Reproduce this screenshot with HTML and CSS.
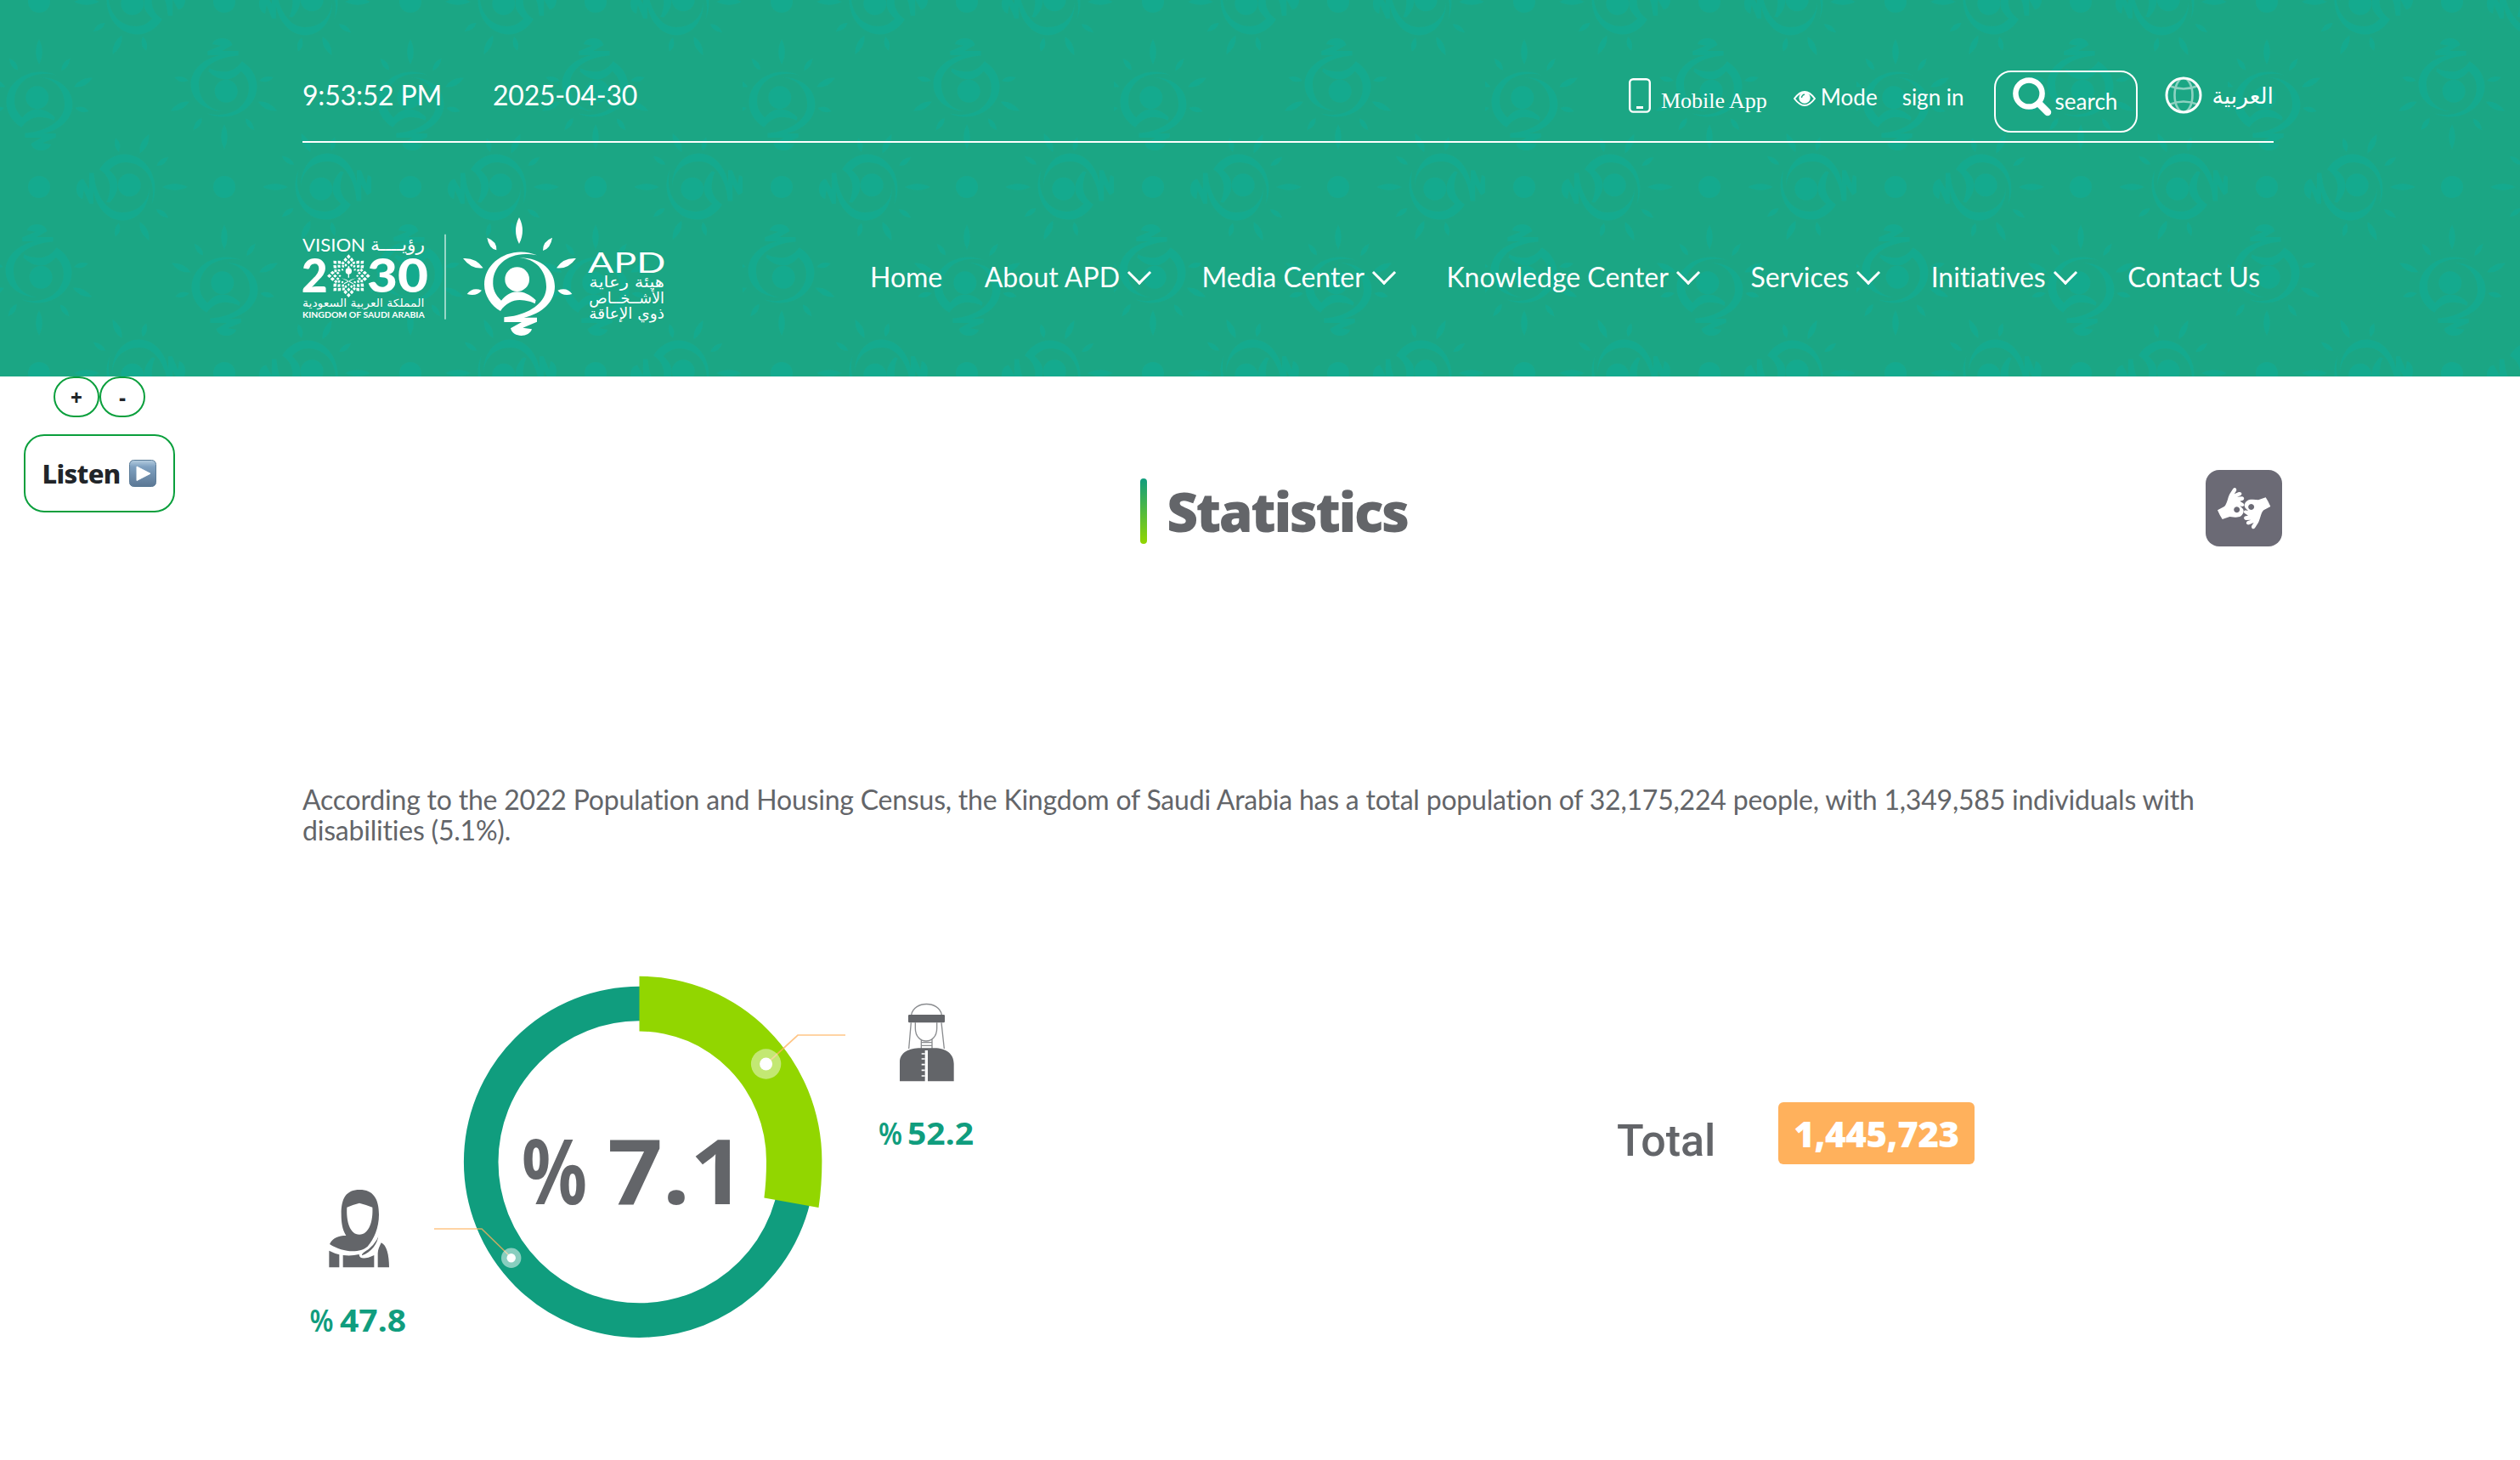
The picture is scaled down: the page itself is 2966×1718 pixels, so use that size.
FILE: index.html
```html
<!DOCTYPE html>
<html lang="en">
<head>
<meta charset="utf-8">
<title>Statistics - APD</title>
<link rel="stylesheet" href="styles.css">
</head>
<body>
<header class="header">
  <svg class="header-pattern" width="2966" height="443" aria-hidden="true">
    <defs>
      <g id="bulb">
        <path d="M813 48Q837 95 813 142Q789 95 813 48ZM700 120Q735 133 733 164Q706 158 700 120ZM930 120Q924 158 897 166Q896 133 930 120ZM615 193Q661 190 686 227Q645 233 615 193ZM1014 193Q985 233 945 227Q968 190 1014 193ZM629 319Q648 293 681 306Q662 329 629 319ZM1000 319Q967 329 949 306Q982 293 1000 319Z"/>
        <circle cx="806" cy="267" r="43"/>
        <path d="M876 182C790 145 690 200 690 285C690 325 715 360 747 379C765 352 790 340 815 340C838 341 858 346 869 353L872 341C850 320 830 311 806 311C783 311 765 325 750 342C728 322 719 300 721 272C725 215 780 162 876 182Z"/>
        <path d="M814 191C895 191 939 240 939 292C939 345 895 388 830 402L876 402L876 417L826 438L858 443C850 473 790 475 783 440L822 418L760 418L760 401L795 396C860 382 908 345 909 295C910 235 870 195 814 191Z"/>
      </g>
      <g id="motif" transform="scale(.313) translate(-813 -258)"><use href="#bulb"/></g>
      <pattern id="bulbs" width="437" height="437" patternUnits="userSpaceOnUse">
        <g fill="#14aa8e">
          <use href="#motif" x="46" y="112"/>
          <use href="#motif" transform="translate(264 110) rotate(180)"/>
          <use href="#motif" transform="translate(46 329) rotate(180)"/>
          <use href="#motif" x="264" y="330"/>
          <use href="#motif" transform="translate(155 220) rotate(90)"/>
          <use href="#motif" transform="translate(375 220) rotate(-90)"/>
          <use href="#motif" transform="translate(153 2) rotate(-90)"/>
          <use href="#motif" transform="translate(370 2) rotate(90)"/>
          <use href="#motif" transform="translate(153 439) rotate(-90)"/>
          <use href="#motif" transform="translate(370 439) rotate(90)"/>
          <circle cx="46" cy="2" r="13"/><circle cx="264" cy="2" r="13"/>
          <circle cx="46" cy="220" r="13"/><circle cx="264" cy="220" r="13"/>
          <circle cx="46" cy="439" r="13"/><circle cx="264" cy="439" r="13"/>
        </g>
      </pattern>
    </defs>
    <rect width="2966" height="443" fill="url(#bulbs)"/>
  </svg>
  <div class="container">
    <div class="topbar">
      <div class="clock"><span class="time">9:53:52 PM</span><span class="date">2025-04-30</span></div>
      <div class="tools">
        <a class="mobile"><svg width="26" height="41" viewBox="0 0 26 41" fill="none" stroke="#fff" stroke-width="2.4"><rect x="1.2" y="1.2" width="23.6" height="38.4" rx="4"/><path d="M9 34.5h8" stroke-width="3"/></svg><span>Mobile App</span></a>
        <a class="mode"><svg width="26" height="18" viewBox="0 0 26 18"><path d="M1 9Q13-7 25 9Q13 25 1 9Z" fill="none" stroke="#fff" stroke-width="2"/><circle cx="13" cy="8" r="6.7" fill="#fff"/><path d="M9.5 8A3.6 3.6 0 0 1 13 4.3" fill="none" stroke="#1ba684" stroke-width="1.4"/></svg><span>Mode</span></a>
        <a class="signin">sign in</a>
        <a class="search"><svg width="46" height="46" viewBox="0 0 46 46" fill="none" stroke="#fff"><circle cx="19" cy="19" r="15.6" stroke-width="6.5"/><path d="M31 31L41 41" stroke-width="8.5" stroke-linecap="round"/></svg><span>search</span></a>
        <a class="lang"><svg width="44" height="44" viewBox="0 0 44 44" fill="none" stroke="#fff"><g stroke-width="2.6" opacity=".5"><ellipse cx="22" cy="22" rx="10.5" ry="20"/><path d="M5 11Q22 18 39 11M5 33Q22 26 39 33"/></g><circle cx="22" cy="22" r="20" stroke-width="3"/></svg><span lang="ar" dir="rtl">العربية</span></a>
      </div>
    </div>
    <div class="mainbar">
      <svg class="logo" width="430" height="145" viewBox="48 40 1290 435" fill="#fff">
        <defs>
          <g id="arm"><path d="M0-76l7 8-7 8-7-8ZM-11-65l7 8-7 8-7-8ZM11-65l7 8-7 8-7-8ZM0-55l6 7-6 7-6-7ZM-20-52l6 7-6 6-6-6ZM-10-44l5 6-5 6-5-6ZM10-44l5 6-5 6-5-6ZM0-36l4 5-4 5-4-5Z"/></g>
        </defs>
        <text class="lato" x="48" y="170" font-size="66" textLength="222" lengthAdjust="spacingAndGlyphs">VISION</text>
        <text class="arabic" x="288" y="166" font-size="64" textLength="192" lengthAdjust="spacingAndGlyphs">رؤيــــة</text>
        <text class="black" x="44" y="314" font-size="163" textLength="93" lengthAdjust="spacingAndGlyphs">2</text>
        <g transform="translate(211 255)">
          <use href="#arm"/><use href="#arm" transform="rotate(45)"/><use href="#arm" transform="rotate(90)"/><use href="#arm" transform="rotate(135)"/><use href="#arm" transform="rotate(180)"/><use href="#arm" transform="rotate(225)"/><use href="#arm" transform="rotate(270)"/><use href="#arm" transform="rotate(315)"/>
          <circle cy="-17" r="11"/><path d="M-2-10H2V6H-2ZM-26 8Q-5 12 17 26L15 29Q-8 16-26 8ZM26 8Q5 12-17 26L-15 29Q8 16 26 8Z"/>
        </g>
        <text class="black" x="276" y="314" font-size="163" textLength="216" lengthAdjust="spacingAndGlyphs">30</text>
        <text class="arabic" x="48" y="364" font-size="38" textLength="430" lengthAdjust="spacingAndGlyphs">المملكة العربية السعودية</text>
        <text class="bold" x="48" y="403" font-size="27" textLength="431" lengthAdjust="spacingAndGlyphs">KINGDOM OF SAUDI ARABIA</text>
        <path d="M549 108h6V408h-6Z" opacity=".55"/>
        <use href="#bulb"/>
        <text class="lato" x="1056" y="243" font-size="99" textLength="274" lengthAdjust="spacingAndGlyphs">APD</text>
        <text class="arabic" x="1060" y="294" font-size="54" textLength="266" lengthAdjust="spacingAndGlyphs">هيئة رعاية</text>
        <text class="arabic" x="1060" y="351" font-size="54" textLength="266" lengthAdjust="spacingAndGlyphs">الأشــخــاص</text>
        <text class="arabic" x="1060" y="407" font-size="54" textLength="266" lengthAdjust="spacingAndGlyphs">ذوي الإعاقة</text>
      </svg>
      <nav class="nav">
        <a>Home</a>
        <a class="menu">About APD<i class="chevron"></i></a>
        <a class="menu">Media Center<i class="chevron"></i></a>
        <a class="menu">Knowledge Center<i class="chevron"></i></a>
        <a class="menu">Services<i class="chevron"></i></a>
        <a class="menu">Initiatives<i class="chevron"></i></a>
        <a>Contact Us</a>
      </nav>
    </div>
  </div>
</header>

<main class="page">
  <aside class="reader">
    <div class="sizes"><button class="size">+</button><button class="size">-</button></div>
    <button class="listen">Listen <svg width="32" height="32" viewBox="0 0 32 32"><defs><linearGradient id="key" x2="0" y2="1"><stop offset="0" stop-color="#b5cde0"/><stop offset=".25" stop-color="#7fa1c1"/><stop offset="1" stop-color="#5b7794"/></linearGradient></defs><rect x=".5" y=".5" width="31" height="31" rx="5" fill="url(#key)" stroke="#5c7c98"/><path d="M9 8v16.500l16-8.250Z" fill="#fff" stroke="#fff" stroke-linejoin="round"/></svg></button>
  </aside>
  <button class="sign" aria-label="Sign language">
    <svg width="90" height="90" viewBox="108 69 270 270" fill="#fff">
      <g id="hand"><path fill-rule="evenodd" d="M150 211L174 198C184 189 185 170 193 154L205 135C212 127 221 137 215 145L209 154L225 147C236 145 239 156 230 160L219 164L236 163C246 164 246 176 237 177L229 179L241 187C248 193 242 200 234 197L229 196C237 203 243 208 242 216C239 232 226 237 212 236L193 234L167 243Q157 228 150 211ZM218 199a10.500 10.500 0 1 0 .1 0Z"/></g>
      <use href="#hand" transform="rotate(180 243.500 204.500)"/>
    </svg>
  </button>
  <div class="container">
    <h1 class="title"><span class="title-bar"></span><span class="title-text">Statistics</span></h1>
    <p class="intro">According to the 2022 Population and Housing Census, the Kingdom of Saudi Arabia has a total population of 32,175,224 people, with 1,349,585 individuals with disabilities (5.1%).</p>
    <section class="stats">
      <svg class="chart" width="800" height="440" viewBox="356 1140 800 440">
        <circle cx="752.500" cy="1367.300" r="186.300" fill="none" stroke="#109d7e" stroke-width="40.600"/>
        <path d="M752.500 1148.700A215 217.300 0 0 1 967.400 1366Q967.400 1395 963.500 1421L899.400 1409.500Q902 1390 902 1366A149.500 152.500 0 0 0 752.500 1213.500Z" fill="#92d600"/>
        <g fill="none" stroke="#ffb15c" stroke-width="1.700" opacity=".75"><path d="M902 1252L939 1218H995M602 1480L567 1446H511"/></g>
        <g fill="#fff"><circle cx="901.600" cy="1252" r="17.700" opacity=".45"/><circle cx="901.600" cy="1252" r="7.500"/><circle cx="601.700" cy="1480.300" r="11.700" opacity=".5"/><circle cx="601.700" cy="1480.300" r="5.200"/></g>
        <g class="figure">
          <text x="614" y="1416.500" font-size="106" font-weight="700" textLength="77" lengthAdjust="spacingAndGlyphs">%</text>
          <text x="715" y="1416.500" font-size="106" font-weight="700" textLength="162" lengthAdjust="spacingAndGlyphs">7.1</text>
        </g>
        <g class="share">
          <text x="1034" y="1346.500" font-size="36" font-weight="600" textLength="28" lengthAdjust="spacingAndGlyphs">%</text>
          <text x="1068" y="1346.500" font-size="36" font-weight="700" textLength="78" lengthAdjust="spacingAndGlyphs">52.2</text>
          <text x="364.500" y="1567" font-size="36" font-weight="600" textLength="28" lengthAdjust="spacingAndGlyphs">%</text>
          <text x="400" y="1567" font-size="36" font-weight="700" textLength="78" lengthAdjust="spacingAndGlyphs">47.8</text>
        </g>
        <g transform="translate(1020 1170) scale(.33333)" fill="#636569">
          <path d="M117 307V240C117 205 150 190 190 190H240C280 190 308 210 308 245V307H216V198H206V307Z"/>
          <rect x="147" y="72" width="129" height="28" rx="4"/>
          <g fill="none" stroke="#636569" stroke-width="4"><path d="M158 72C168 22 255 22 265 72M172 100V120C172 180 248 180 248 120V100M193 158V192M231 158V192M193 170H231M193 181H231M157 100L149 192M264 100L274 192" opacity=".75"/></g>
          <path d="M194 210h12M194 228h12M194 248h12M194 268h12M194 288h12" stroke="#fff" stroke-width="5"/>
        </g>
        <g transform="translate(350 1380) scale(.33333)" fill="#636569">
          <path fill-rule="evenodd" d="M155 145C155 90 172 60 220 60C268 60 288 92 288 148C288 195 270 235 248 260C220 285 160 282 114 252C125 229 145 222 172 222C158 200 155 175 155 145ZM175 122C172 170 185 218 219 218C253 218 268 170 265 122Q243 113 219 107Q195 113 175 122Z"/>
          <path d="M112 275Q132 285 148 289V334H112ZM161 291Q190 295 218 288C218 305 240 306 271 291V334H161ZM296 247C315 255 324 290 324 334H284V284C284 272 290 260 296 247ZM286 220C285 250 260 282 228 292C228 280 258 270 286 220Z"/>
          <path d="M289 212C276 245 255 268 230 280" fill="none" stroke="#fff" stroke-width="6"/>
        </g>
      </svg>
      <div class="total"><span class="total-label">Total</span><span class="total-badge">1,445,723</span></div>
    </section>
  </div>
</main>
</body>
</html>
```
FILE: styles.css
```css
* { box-sizing: border-box; }
body {
  margin: 0;
  background: #fff;
  font-family: Lato, "DejaVu Sans", sans-serif;
  font-variant-ligatures: none;
  color: #636569;
  overflow: hidden;
}
button { padding: 0; background: none; font: inherit; }
.container { width: 2320px; margin: 0 auto 0 356px; }

.header { position: relative; height: 443px; background: #1ba684; color: #fff; overflow: hidden; }
.header-pattern { position: absolute; left: 0; top: 0; }
.header .container { position: relative; }

.topbar {
  display: flex;
  justify-content: space-between;
  align-items: flex-start;
  height: 168px;
  padding-top: 83px;
  border-bottom: 2px solid #fff;
}
.clock { display: flex; gap: 60px; padding-top: 9px; font-size: 32px; line-height: 40px; letter-spacing: -0.2px; }
.tools { display: flex; align-items: flex-start; font-size: 26px; line-height: 32px; white-space: nowrap; }
.tools a { display: flex; }
.mobile { gap: 12px; margin-right: 31px; padding-top: 9px; font-family: "Liberation Serif", serif; }
.mobile span { padding-top: 11px; }
.mode { gap: 6px; margin-right: 29px; padding-top: 15px; }
.mode svg { margin-top: 9px; }
.tools .signin { margin-right: 35px; padding-top: 15px; }
.search { width: 169px; height: 73px; padding: 6px 0 0 20px; border: 2px solid #fff; border-radius: 20px; gap: 4px; }
.search span { padding-top: 12px; }
.lang { gap: 12px; margin-left: 32px; padding-top: 7px; }
.lang span { padding-top: 7px; font-family: "DejaVu Sans", sans-serif; font-size: 26.5px; }

.mainbar { display: flex; justify-content: space-between; align-items: center; margin-top: 85px; }
.lato { font-family: Lato, sans-serif; }
.bold { font-family: Lato, sans-serif; font-weight: 700; }
.black { font-family: Lato, sans-serif; font-weight: 900; }
.arabic { font-family: "DejaVu Sans", sans-serif; font-variant-ligatures: normal; }
.nav { display: flex; gap: 49.5px; padding-right: 16px; font-size: 32px; line-height: 40px; white-space: nowrap; }
.menu { display: flex; align-items: center; gap: 13px; padding-right: 14px; }
.chevron { width: 20px; height: 20px; margin: -9px 0 0; border: solid #fff; border-width: 0 3.500px 3.500px 0; transform: rotate(45deg); }

.page { position: relative; height: 1275px; }
.reader { position: absolute; left: 28px; top: 0; width: 178px; }
.sizes { display: flex; justify-content: center; }
.size {
  width: 54px;
  height: 48px;
  border: 2px solid #0a9f3c;
  border-radius: 26px;
  color: #212529;
  font: 800 24px/46px "Noto Sans", sans-serif;
}
.listen {
  display: flex;
  justify-content: center;
  align-items: center;
  gap: 11px;
  width: 178px;
  height: 92px;
  margin-top: 20px;
  border: 2px solid #0a9f3c;
  border-radius: 24px;
  color: #212529;
  font: 800 31px/40px "Noto Sans", sans-serif;
  letter-spacing: -0.7px;
}
.sign { position: absolute; left: 2596px; top: 110px; width: 90px; height: 90px; border: 0; border-radius: 16px; background: #6b6a75; }

.title { display: flex; justify-content: center; align-items: center; gap: 23px; height: 77px; margin: 0; padding-right: 33px; }
.page .container { padding-top: 120px; }
.title-bar { width: 8px; height: 77px; border-radius: 4px; background: linear-gradient(#109d7e, #92d600); }
.title-text { font: 900 64px/77px "Noto Sans", sans-serif; letter-spacing: -2.400px; color: #636569; }
.intro { margin: 283px 0 0; font-size: 32px; line-height: 36px; letter-spacing: -0.21px; }
.stats { display: flex; justify-content: space-between; align-items: flex-start; margin-top: 145px; }
.figure { font-family: "Noto Sans", sans-serif; fill: #636569; }
.share { font-family: "Noto Sans", sans-serif; fill: #109d7e; }
.total { display: flex; align-items: flex-start; justify-content: space-between; width: 421px; margin: 157px 352px 0 0; }
.total-label { padding-top: 14px; font: 500 52px/64px Roboto, sans-serif; }
.total-badge { width: 231px; height: 73px; border-radius: 6px; background: #ffb15c; color: #fff; font: 900 42px/73px "Noto Sans", sans-serif; letter-spacing: -0.4px; text-align: center; }
```
